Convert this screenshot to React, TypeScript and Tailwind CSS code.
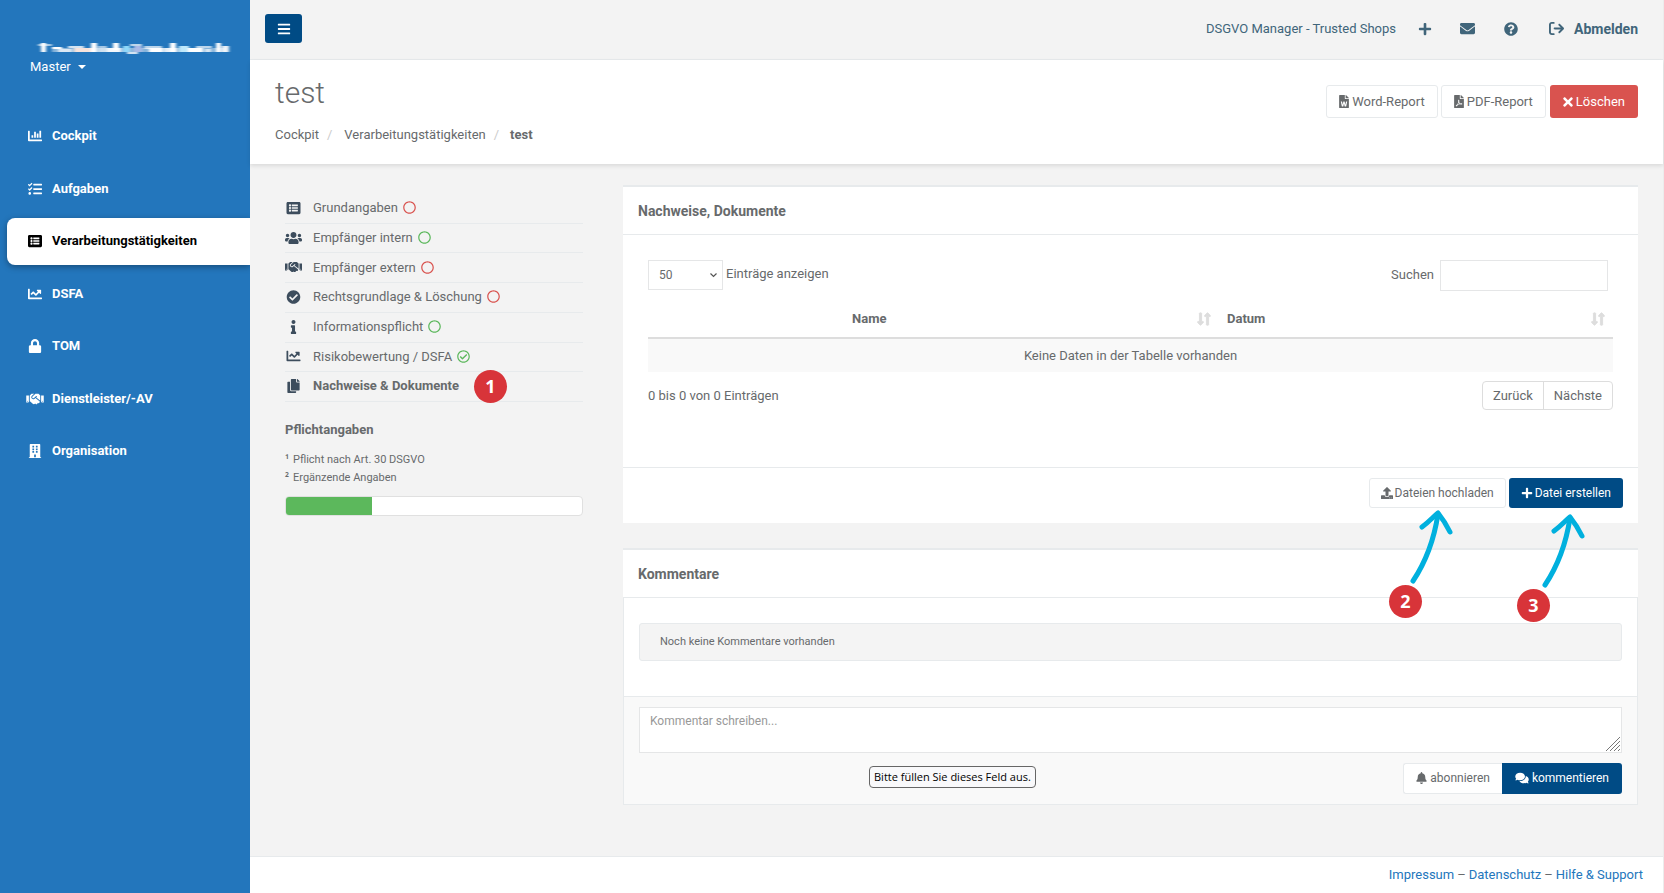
import React from 'react';
import {
  FaBars,
  FaBell,
  FaBuilding,
  FaChartBar,
  FaChartLine,
  FaCheckCircle,
  FaComments,
  FaCopy,
  FaEnvelope,
  FaFilePdf,
  FaFileWord,
  FaHandshake,
  FaInfo,
  FaListAlt,
  FaLock,
  FaLongArrowAltDown,
  FaLongArrowAltUp,
  FaPlus,
  FaQuestionCircle,
  FaRegCheckCircle,
  FaRegCircle,
  FaTasks,
  FaTimes,
  FaUpload,
  FaUsers,
} from 'react-icons/fa';
import { FaArrowRightFromBracket } from 'react-icons/fa6';
import type { IconType } from 'react-icons';

interface NavEntry {
  label: string;
  icon: IconType;
  active?: boolean;
}

interface Section {
  label: string;
  icon: IconType;
  status?: 'open' | 'optional' | 'done';
  marker?: string;
}

const navEntries: NavEntry[] = [
  { label: 'Cockpit', icon: FaChartBar },
  { label: 'Aufgaben', icon: FaTasks },
  { label: 'Verarbeitungstätigkeiten', icon: FaListAlt, active: true },
  { label: 'DSFA', icon: FaChartLine },
  { label: 'TOM', icon: FaLock },
  { label: 'Dienstleister/-AV', icon: FaHandshake },
  { label: 'Organisation', icon: FaBuilding },
];

const sections: Section[] = [
  { label: 'Grundangaben', icon: FaListAlt, status: 'open' },
  { label: 'Empfänger intern', icon: FaUsers, status: 'optional' },
  { label: 'Empfänger extern', icon: FaHandshake, status: 'open' },
  { label: 'Rechtsgrundlage & Löschung', icon: FaCheckCircle, status: 'open' },
  { label: 'Informationspflicht', icon: FaInfo, status: 'optional' },
  { label: 'Risikobewertung / DSFA', icon: FaChartLine, status: 'done' },
  { label: 'Nachweise & Dokumente', icon: FaCopy, marker: '1' },
];

const progress = 29;

const Marker: React.FC<{ value: string }> = ({ value }) => (
  <span className="flex size-[33px] items-center justify-center rounded-full bg-[#d83439] pb-[2px] font-['Open_Sans',sans-serif] text-[18px] font-bold leading-none text-white">
    {value}
  </span>
);

const Arrow: React.FC = () => (
  <svg className="overflow-visible" width="36" height="76" viewBox="0 0 36 76" fill="none" stroke="#00b0de" strokeWidth="5" strokeLinecap="round" strokeLinejoin="round">
    <path d="M4 72C16 54 25 31 29 5" />
    <path d="M13 18C20 13 24 8 29 4C33 9 37 15 41 23" />
  </svg>
);

const StatusIcon: React.FC<{ status: Section['status'] }> = ({ status }) => {
  if (status === 'open') return <FaRegCircle className="size-[13px] text-[#d9534f]" />;
  if (status === 'optional') return <FaRegCircle className="size-[13px] text-[#5cb85c]" />;
  if (status === 'done') return <FaRegCheckCircle className="size-[13px] text-[#5cb85c]" />;
  return null;
};

const MaskedAccount: React.FC = () => (
  <svg width="204" height="16" viewBox="-4 0 204 16" role="img" aria-label="Benutzerkonto">
    <defs>
      <filter id="smear" x="-5%" y="-20%" width="110%" height="140%">
        <feGaussianBlur stdDeviation="1.6 0.6" />
      </filter>
    </defs>
    <g filter="url(#smear)" fill="#fff">
      <rect x="18" y="8" width="174" height="4" opacity="0.45" />
      <rect x="7" y="3" width="5" height="9" />
      <rect x="4" y="4" width="14" height="2" opacity="0.6" />
      <rect x="18" y="7" width="10" height="2" />
      <rect x="24" y="9" width="14" height="3" opacity="0.7" />
      <rect x="34" y="6" width="16" height="2" opacity="0.8" />
      <rect x="40" y="8" width="18" height="4" fill="#f6e3dc" />
      <rect x="57" y="3" width="6" height="9" />
      <rect x="64" y="6" width="9" height="6" opacity="0.6" />
      <rect x="73" y="8" width="14" height="4" opacity="0.9" />
      <rect x="79" y="3" width="6" height="7" />
      <rect x="89" y="6" width="7" height="6" fill="#8fd8fa" />
      <rect x="96" y="4" width="12" height="2" opacity="0.7" />
      <rect x="93" y="12" width="11" height="2" opacity="0.8" />
      <rect x="100" y="6" width="8" height="6" fill="#a9b9e6" />
      <rect x="110" y="6" width="18" height="3" opacity="0.7" />
      <rect x="115" y="8" width="14" height="4" />
      <rect x="136" y="3" width="6" height="9" />
      <rect x="130" y="8" width="13" height="4" opacity="0.8" />
      <rect x="145" y="6" width="10" height="6" fill="#bfe9fb" />
      <rect x="154" y="8" width="15" height="4" />
      <rect x="162" y="6" width="16" height="2" opacity="0.7" />
      <rect x="171" y="9" width="6" height="3" opacity="0.7" />
      <rect x="182" y="3" width="5" height="9" />
      <rect x="188" y="6" width="7" height="6" opacity="0.9" />
    </g>
  </svg>
);

const Sidebar: React.FC = () => (
  <aside className="w-[250px] shrink-0 bg-[#2376bc] text-white">
    <div className="flex h-[113px] flex-col items-start pl-[30px] pt-10">
      <MaskedAccount />
      <button type="button" className="mt-px flex items-center gap-[7px] leading-5">
        Master
        <svg width="8" height="4" viewBox="0 0 8 4" fill="currentColor">
          <path d="M0 0h8L4 4z" />
        </svg>
      </button>
    </div>
    <nav className="flex h-[362px] flex-col justify-between pl-[7px]">
      {navEntries.map(({ label, icon: Icon, active }) => (
        <a
          key={label}
          href="#"
          className={`flex h-[47px] items-center gap-2 rounded-l-lg pb-px pl-[19px] font-bold ${
            active ? 'bg-white text-black shadow-[0_2px_6px_rgba(0,0,0,0.35)]' : ''
          }`}
        >
          <Icon className="h-[14px] w-[18px]" />
          {label}
        </a>
      ))}
    </nav>
  </aside>
);

const TopBar: React.FC = () => (
  <header className="relative flex h-[60px] items-center justify-between border-b border-[#e7eaec] bg-[#f3f3f3] pb-[2px] pl-[15px] pr-[25px] text-[#40657a]">
    <button type="button" aria-label="Menü" className="flex h-[29px] w-[37px] items-center justify-center rounded-[3px] bg-[#004b85] text-white">
      <FaBars className="size-[14px]" />
    </button>
    <div className="flex items-center">
      <span className="mr-[22px]">DSGVO Manager - Trusted Shops</span>
      <a href="#" aria-label="Neu" className="mr-7"><FaPlus className="size-[14px]" /></a>
      <a href="#" aria-label="Nachrichten" className="mr-[29px]"><FaEnvelope className="size-[15px]" /></a>
      <a href="#" aria-label="Hilfe" className="mr-[31px]"><FaQuestionCircle className="size-[14px]" /></a>
      <a href="#" className="flex items-center gap-[10px] text-sm font-bold">
        <FaArrowRightFromBracket className="size-[15px]" />
        Abmelden
      </a>
    </div>
  </header>
);

const PageHeading: React.FC = () => (
  <div className="relative flex h-[104px] items-start justify-between bg-white pl-[25px] pr-[25px] shadow-[0_2px_4px_rgba(0,0,0,0.1)]">
    <div>
      <h1 className="mt-4 text-[30px] font-light leading-[34px]">test</h1>
      <ol className="mt-[15px] flex leading-5">
        <li><a href="#">Cockpit</a></li>
        <li className="ml-2 mr-3 text-[#cccccc]">/</li>
        <li><a href="#">Verarbeitungstätigkeiten</a></li>
        <li className="ml-2 mr-[11px] text-[#cccccc]">/</li>
        <li className="font-bold">test</li>
      </ol>
    </div>
    <div className="mt-[25px] flex gap-[3px]">
      <button type="button" className="flex h-[33px] items-center gap-[3px] rounded-[3px] border border-[#e7eaec] px-3">
        <FaFileWord className="h-[13px] w-[10px]" />
        Word-Report
      </button>
      <button type="button" className="flex h-[33px] items-center gap-[3px] rounded-[3px] border border-[#e7eaec] px-3">
        <FaFilePdf className="h-[13px] w-[10px]" />
        PDF-Report
      </button>
      <button type="button" className="ml-px flex h-[33px] items-center gap-[3px] rounded-[3px] bg-[#d9534f] px-[13px] text-white">
        <FaTimes className="h-[14px] w-[10px]" />
        Löschen
      </button>
    </div>
  </div>
);

const SectionList: React.FC = () => (
  <div className="w-[298px] shrink-0 pt-[9px]">
    <ul className="grid h-[208px] grid-rows-7">
      {sections.map(({ label, icon: Icon, status, marker }) => (
        <li key={label} className="relative border-b border-[#e7eaec]">
          <a href="#" className={`flex h-full items-center pb-px ${marker ? 'font-bold' : ''}`}>
            <Icon className="mr-[11px] h-[14px] w-[17px] text-[#3d4d5d]" />
            <span className="mr-[5px]">{label}</span>
            <StatusIcon status={status} />
          </a>
          {marker && (
            <span className="absolute -top-[2px] left-[189px]">
              <Marker value={marker} />
            </span>
          )}
        </li>
      ))}
    </ul>
    <h2 className="mt-[18px] font-bold leading-5">Pflichtangaben</h2>
    <ul className="mt-[11px] text-[11px] leading-[18px]">
      <li className="flex gap-1"><span className="font-['Open_Sans',sans-serif] font-semibold">¹</span>Pflicht nach Art. 30 DSGVO</li>
      <li className="flex gap-1"><span className="font-['Open_Sans',sans-serif] font-semibold">²</span>Ergänzende Angaben</li>
    </ul>
    <div className="mt-[9px] h-5 overflow-hidden rounded border border-[#e0e0e0] bg-white">
      <div className="h-full bg-[#5cb85c]" style={{ width: `${progress}%` }} />
    </div>
  </div>
);

const SortIcon: React.FC = () => (
  <span className="flex text-[#dddddd]">
    <FaLongArrowAltDown className="h-[14px] w-[7px]" stroke="currentColor" strokeWidth="32" />
    <FaLongArrowAltUp className="h-[14px] w-[7px]" stroke="currentColor" strokeWidth="32" />
  </span>
);

const DocumentsCard: React.FC = () => (
  <section className="border-t-2 border-[#e7eaec] bg-white">
    <h2 className="flex h-12 items-center border-b border-[#e7eaec] px-[15px] text-sm font-bold">Nachweise, Dokumente</h2>
    <div className="px-[25px] pt-[25px]">
      <div className="flex items-start justify-between pr-[5px]">
        <label className="flex items-start gap-[3px] leading-7">
          <span className="relative">
            <select defaultValue="50" className="block h-[30px] w-[75px] appearance-none border border-[#e5e6e7] bg-white pl-[10px] text-xs">
              <option>10</option>
              <option>25</option>
              <option>50</option>
            </select>
            <svg className="pointer-events-none absolute right-[6px] top-[13px]" width="7" height="5" viewBox="0 0 7 5" fill="none" stroke="#555" strokeWidth="1.2">
              <path d="M0.5 0.5l3 3 3-3" />
            </svg>
          </span>
          Einträge anzeigen
        </label>
        <label className="flex items-start gap-[6px] leading-[30px]">
          Suchen
          <input type="text" className="h-[31px] w-[168px] border border-[#e5e6e7] bg-white px-2 text-xs" />
        </label>
      </div>
      <table className="mt-[9px] w-full table-fixed">
        <thead>
          <tr className="h-[38px] border-b-2 border-[#dddddd] text-left">
            <th className="w-[196px]"></th>
            <th className="pl-2 pr-[7px]">
              <div className="flex items-center justify-between">Name <SortIcon /></div>
            </th>
            <th className="w-[395px] pl-[9px] pr-2">
              <div className="flex items-center justify-between">Datum <SortIcon /></div>
            </th>
          </tr>
        </thead>
        <tbody>
          <tr className="h-[34px] bg-[#f9f9f9] text-center">
            <td colSpan={3}>Keine Daten in der Tabelle vorhanden</td>
          </tr>
        </tbody>
      </table>
      <div className="flex h-[95px] items-start justify-between pt-[9px]">
        <span className="mt-[5px] leading-5">0 bis 0 von 0 Einträgen</span>
        <div className="flex h-[29px] rounded border border-[#dddddd] leading-[26px]">
          <button type="button" className="border-r border-[#dddddd] px-[10px]">Zurück</button>
          <button type="button" className="px-[10px]">Nächste</button>
        </div>
      </div>
    </div>
    <div className="relative flex h-14 items-start justify-end gap-[3px] border-t border-[#e7eaec] pr-[15px] pt-[10px] text-xs">
      <button type="button" className="flex h-[30px] items-center gap-[2px] rounded-[3px] border border-[#e7eaec] px-[11px]">
        <FaUpload className="size-3" />
        Dateien hochladen
      </button>
      <button type="button" className="flex h-[30px] items-center gap-[2px] rounded-[3px] bg-[#004b85] px-3 text-white">
        <FaPlus className="size-3" />
        Datei erstellen
      </button>
      {/* guide arrows and step numbers */}
      <span className="absolute right-[193px] top-[41px]"><Arrow /></span>
      <span className="absolute right-[216px] top-[117px]"><Marker value="2" /></span>
      <span className="absolute right-[61px] top-[45px]"><Arrow /></span>
      <span className="absolute right-[88px] top-[121px]"><Marker value="3" /></span>
    </div>
  </section>
);

const CommentsCard: React.FC = () => (
  <section className="mt-[25px] border-t-2 border-[#e7eaec] bg-white">
    <h2 className="flex h-[47px] items-center px-[15px] text-sm font-bold">Kommentare</h2>
    <div className="border border-[#e7eaec]">
      <div className="px-[15px] pb-[35px] pt-[25px]">
        <p className="flex h-[38px] items-center rounded-[3px] border border-[#e7eaec] bg-[#f4f4f4] px-5 text-[11px]">
          Noch keine Kommentare vorhanden
        </p>
      </div>
      <form className="border-t border-[#e7eaec] bg-[#f9f9f9] px-[15px] py-[10px]" onSubmit={(e) => e.preventDefault()}>
        <div className="relative">
          <textarea
            aria-label="Kommentar"
            placeholder="Kommentar schreiben..."
            className="block h-[46px] w-full resize-none border border-[#e5e6e7] bg-white px-[10px] py-[5px] text-xs placeholder:text-[#999999]"
          />
          <svg className="pointer-events-none absolute bottom-[2px] right-[2px]" width="14" height="14" viewBox="0 0 14 14" stroke="#777" strokeWidth="1">
            <path d="M0 14L14 0M4 14L14 4M8 14L14 8M12 14L14 12" />
          </svg>
          <span
            role="tooltip"
            className="absolute left-[230px] top-[59px] flex h-[22px] items-center whitespace-nowrap rounded border border-[#666666] bg-[#f9f9fb] px-1 font-['Open_Sans',sans-serif] text-[11px] text-black"
          >
            Bitte füllen Sie dieses Feld aus.
          </span>
        </div>
        <div className="mt-[10px] flex justify-end text-xs">
          <button type="button" className="flex h-[31px] items-center gap-[3px] rounded-l-[3px] border border-r-0 border-[#e7eaec] bg-white px-3 pb-px">
            <FaBell className="h-3 w-[11px]" />
            abonnieren
          </button>
          <button type="submit" className="flex h-[31px] items-center gap-[3px] rounded-r-[3px] bg-[#004b85] px-[13px] pb-px text-white">
            <FaComments className="h-3 w-[14px]" />
            kommentieren
          </button>
        </div>
      </form>
    </div>
  </section>
);

export default function App() {
  return (
    <div className="flex min-h-screen bg-[#f3f3f3] font-[Roboto,sans-serif] text-[13px] text-[#676a6c]">
      <Sidebar />
      <div className="relative flex min-w-0 flex-1 flex-col border-r border-[#ececec] bg-[#f3f3f3]">
        <TopBar />
        <PageHeading />
        <main className="flex flex-1 gap-10 pb-[50px] pl-[35px] pr-[25px] pt-[21px]">
          <SectionList />
          <div className="min-w-0 flex-1">
            <DocumentsCard />
            <CommentsCard />
          </div>
        </main>
        <footer className="flex h-[37px] items-center justify-end gap-[3px] border-t border-[#e7eaec] bg-white pr-5">
          <a href="#" className="text-[#2376bc]">Impressum</a>–
          <a href="#" className="text-[#2376bc]">Datenschutz</a>–
          <a href="#" className="text-[#2376bc]">Hilfe &amp; Support</a>
        </footer>
      </div>
    </div>
  );
}
